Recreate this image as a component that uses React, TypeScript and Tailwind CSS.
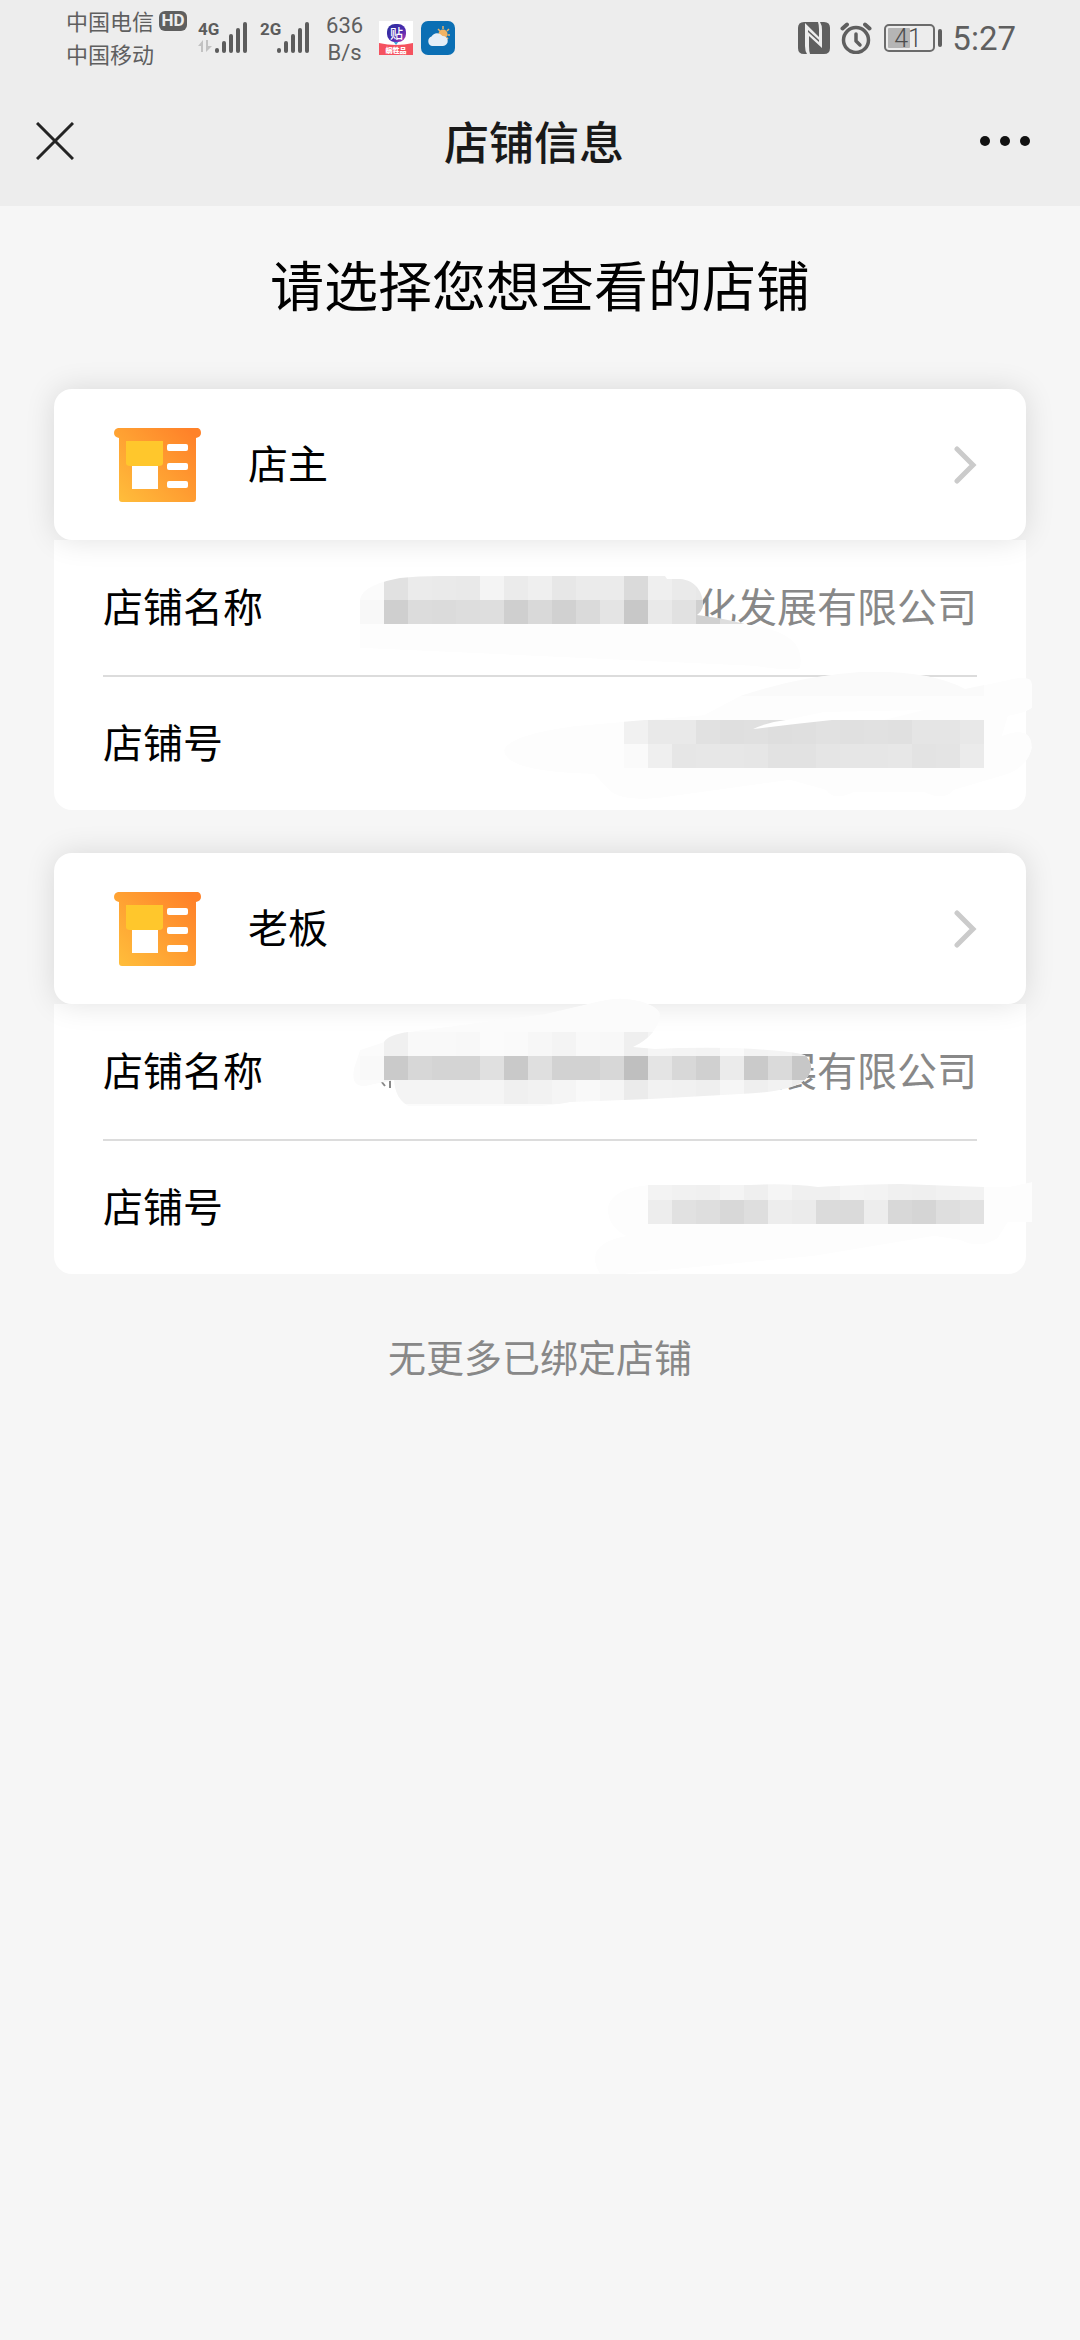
import type { ReactNode } from "react";

type CellRow = {
  x: number;
  y: number;
  colors: string[];
};

type Smudge = {
  id: string;
  outline: string;
  base: string;
  rows: CellRow[];
  children?: ReactNode;
};

type Shop = {
  id: string;
  role: string;
  nameTail: string;
  overlay: ReactNode;
};

const CELL = 24;

// One censored area: a hand-drawn outline filled with a grid of grey cells
function Mosaic({ id, outline, base, rows, children }: Smudge) {
  return (
    <g>
      <clipPath id={id}>
        <path d={outline} />
      </clipPath>
      <g clipPath={`url(#${id})`}>
        <path d={outline} fill={base} />
        {rows.map((row) => (
          <g key={row.y} shapeRendering="crispEdges">
            {row.colors.map((color, i) => (
              <rect key={i} x={row.x + i * CELL} y={row.y} width={CELL} height={CELL} fill={color} />
            ))}
          </g>
        ))}
      </g>
      {children}
    </g>
  );
}

const ownerOverlay = (
  <>
    <Mosaic
      id="owner-name"
      base="#fdfdfd"
      outline="M306 62 C306 50 320 43 346 38 Q364 36 386 36 H611 L613 39 H626 C643 40 650 55 649 66 Q648 71 643 75 Q668 78 691 84 C736 90 751 105 746 128 Q740 132 700 126 L306 108 Z"
      rows={[
        { x: 306, y: 36, colors: ["#fbfbfb", "#e1e1e1", "#ebebeb", "#eaeaea", "#e9e9e9", "#f4f4f4", "#ebebeb", "#efefef", "#e7e7e7", "#ebebeb", "#ebebeb", "#dadada", "#efefef", "#eaeaea", "#e8e8e8"] },
        { x: 306, y: 60, colors: ["#f8f8f8", "#cfcfcf", "#dcdcdc", "#dbdbdb", "#dddddd", "#dedede", "#cfcfcf", "#d9d9d9", "#d1d1d1", "#dadada", "#e4e4e4", "#c8c8c8", "#e9e9e9", "#e1e1e1", "#d0d0d0", "#dedede"] },
      ]}
    />
    <Mosaic
      id="owner-number"
      base="#fdfdfd"
      outline="M450 210 Q455 195 520 186 L650 175 L686 156 Q746 136 806 132 Q876 130 911 149 L954 140 Q978 134 978 144 V168 Q972 173 954 176 L948 196 Q978 184 978 208 Q974 226 954 234 L900 250 Q890 262 870 252 L800 252 Q780 262 772 250 L736 240 L620 256 Q570 264 555 250 L540 234 Q450 232 450 210Z"
      rows={[
        { x: 642, y: 132, colors: Array(12).fill("#fafafa") },
        { x: 570, y: 180, colors: ["#f1f1f1", "#e9e9e9", "#e9e9e9", "#e1e1e1", "#dfdfdf", "#e0e0e0", "#dedede", "#dfdfdf", "#e1e1e1", "#e0e0e0", "#e1e1e1", "#e0e0e0", "#e5e5e5", "#e5e5e5", "#e8e8e8"] },
        { x: 570, y: 204, colors: ["#fafafa", "#efefef", "#e6e6e6", "#e7e7e7", "#e7e7e7", "#e6e6e6", "#e2e2e2", "#e2e2e2", "#e5e5e5", "#e6e6e6", "#e6e6e6", "#e7e7e7", "#e3e3e3", "#e4e4e4", "#ebebeb"] },
      ]}
    >
      <path d="M699 189 Q714 182 732 180 L770 172 L870 170 L830 180 H778 Q740 184 699 189Z" fill="#fff" />
    </Mosaic>
  </>
);

const bossOverlay = (
  <>
    <path d="M327 77 L331 82 M336 76 V84" stroke="#888" strokeWidth="2" fill="none" />
    <Mosaic
      id="boss-name"
      base="#fbfbfb"
      outline="M306 46 Q318 42 330 38 Q334 31 354 28 L491 10 L546 -3 Q566 -8 586 -3 Q606 3 606 11 Q604 31 579 43 L601 45 Q636 43 681 44 Q746 47 752 52 Q764 66 748 78 Q734 88 686 90 L596 95 L516 98 Q496 102 486 102 H354 Q341 94 340 76 L312 82 Q296 84 300 64Z"
      rows={[
        { x: 330, y: 28, colors: ["#f0f0f0", "#f9f9f9", "#f9f9f9", "#f8f8f8", "#fbfbfb", "#fafafa", "#f7f7f7", "#f4f4f4", "#f9f9f9", "#f8f8f8", "#efefef", "#f5f5f5", "#f4f4f4", "#f3f3f3", "#fafafa", "#f3f3f3", "#f4f4f4", "#f0f0f0"] },
        { x: 306, y: 52, colors: ["#f9f9f9", "#cacaca", "#d7d7d7", "#d4d4d4", "#d4d4d4", "#e0e0e0", "#c9c9c9", "#dfdfdf", "#d2d2d2", "#d2d2d2", "#d7d7d7", "#bfbfbf", "#e4e4e4", "#d8d8d8", "#d0d0d0", "#ebebeb", "#cacaca", "#dadada", "#c7c7c7"] },
        { x: 330, y: 76, colors: ["#f4f4f4", "#f4f4f4", "#f4f4f4", "#f4f4f4", "#f5f5f5", "#f0f0f0", "#f2f2f2", "#f5f5f5", "#f9f9f9", "#f5f5f5", "#ebebeb", "#f2f2f2", "#f1f1f1", "#efefef", "#f6f6f6", "#efefef", "#f2f2f2", "#ececec"] },
      ]}
    />
    <Mosaic
      id="boss-number"
      base="#fdfdfd"
      outline="M554 202 Q560 184 594 181 Q640 181 696 181 Q734 179 764 183 Q816 180 846 180 L930 183 H954 L978 178 V218 H954 L944 234 Q926 246 906 236 L880 232 L760 252 L570 270 H546 Q528 240 572 232 Q552 222 554 202Z"
      rows={[
        { x: 594, y: 172, colors: ["#f3f3f3", "#f1f1f1", "#f0f0f0", "#f4f4f4", "#efefef", "#f5f5f5", "#f0f0f0", "#f0f0f0", "#f4f4f4", "#f3f3f3", "#f0f0f0", "#efefef", "#f1f1f1", "#f2f2f2"] },
        { x: 594, y: 196, colors: ["#ededed", "#e1e1e1", "#dedede", "#d8d8d8", "#dedede", "#ededed", "#ebebeb", "#dbdbdb", "#dadada", "#ededed", "#d8d8d8", "#d5d5d5", "#dedede", "#e1e1e1"] },
      ]}
    />
  </>
);

const shops: Shop[] = [
  { id: "owner", role: "店主", nameTail: "化发展有限公司", overlay: ownerOverlay },
  { id: "boss", role: "老板", nameTail: "展有限公司", overlay: bossOverlay },
];

function Signal({ label, arrows }: { label: string; arrows?: boolean }) {
  return (
    <svg viewBox="0 0 52 36" className="h-9 w-13" fill="#5c5c5c">
      <text x="0" y="15" fontSize="17" fontWeight="700" fontFamily="Roboto, sans-serif">{label}</text>
      {arrows && <path d="M0 26 L5 20 V32 H3 V26Z M8 20 H10 V26 H14 L8 32Z" fill="#c2c2c2" />}
      <rect x="17" y="28" width="4" height="5" rx="2" />
      <rect x="24" y="21" width="4" height="12" rx="2" />
      <rect x="31" y="14" width="4" height="19" rx="2" />
      <rect x="38" y="8" width="4" height="25" rx="2" />
      <rect x="45" y="2" width="4" height="31" rx="2" />
    </svg>
  );
}

function StatusBar() {
  return (
    <div className="flex h-19 items-center justify-between pr-16 pl-[66px] text-[#5f5f5f]">
      <div className="flex items-center">
        <div className="pb-[2px] text-[22px] leading-[33px]">
          <div className="flex items-center gap-[5px]">
            <span>中国电信</span>
            <span className="flex h-5 w-7 items-center justify-center rounded-md bg-[#5f5f5f] font-[Roboto,sans-serif] text-[17px] leading-none font-bold text-[#ededed]">
              HD
            </span>
          </div>
          <div>中国移动</div>
        </div>
        <div className="ml-[11px] flex gap-[10px]">
          <Signal label="4G" arrows />
          <Signal label="2G" />
        </div>
        <div className="ml-[14px] pt-[2px] text-center font-[Roboto,sans-serif] text-[22px] leading-[27px]">
          <div>636</div>
          <div>B/s</div>
        </div>
        <div className="ml-4 flex gap-2">
          {/* Sticker app */}
          <svg viewBox="0 0 34 34" className="size-[34px]">
            <defs>
              <linearGradient id="sticker" x1="0" y1="0" x2="1" y2="1">
                <stop offset="0" stopColor="#2b2f9a" />
                <stop offset="0.6" stopColor="#4b2bb0" />
                <stop offset="1" stopColor="#c03fb0" />
              </linearGradient>
            </defs>
            <rect width="34" height="34" fill="#fff" />
            <path d="M14 20 H20 L17 24Z" fill="#3fa0d8" />
            <rect x="8" y="3" width="19" height="18" rx="8" fill="url(#sticker)" />
            <text x="17.5" y="17" fontSize="13" fontWeight="500" textAnchor="middle" fill="#fff">贴</text>
            <path d="M0 22 Q17 26 34 22 V34 H0Z" fill="#f5525f" />
            <text x="17" y="32" fontSize="7" fontWeight="900" textAnchor="middle" fill="#fff">蜗牲品</text>
          </svg>
          {/* Weather app */}
          <svg viewBox="0 0 34 34" className="size-[34px]">
            <rect width="34" height="34" rx="7" fill="#0b6fb4" />
            <path d="M22 5 V8 M28 8 L26 10 M29 14 H26.5 M17 8 L19 10 M27 18 L25.5 16.5" stroke="#e9b46a" strokeWidth="1.5" />
            <circle cx="22" cy="13" r="4.5" fill="#f0b363" />
            <path d="M11 25 A5 5 0 0 1 10.500 15.500 A6.500 6.500 0 0 1 21.500 15 A5 5 0 0 1 22 25Z" fill="#e4eef7" />
          </svg>
        </div>
      </div>

      <div className="flex items-center">
        {/* NFC */}
        <svg viewBox="0 0 32 32" className="size-8">
          <path d="M6 0 H26 Q32 0 32 6 V26 Q32 32 26 32 H6 Q0 32 0 26 V6 Q0 0 6 0Z" fill="#5f5f5f" />
          <path d="M7 1 L21 15 V7 Q21 3 20 0 H22 Q24 3 24 8 V26 L11 14 V24 Q11 29 12 32 H9 Q7 29 7 24Z" fill="#ededed" />
          <path d="M10 8 L21 18 V20 L10 10Z" fill="#5f5f5f" />
        </svg>
        {/* Alarm */}
        <svg viewBox="0 0 32 32" className="ml-[10px] size-8" fill="none" stroke="#5f5f5f" strokeLinecap="round">
          <circle cx="16" cy="18" r="12.500" strokeWidth="3.500" />
          <path d="M16 12 V19 L20 23" strokeWidth="3.500" strokeLinejoin="round" />
          <path d="M2.500 6.500 L7 2.500 M29.500 6.500 L25 2.500" strokeWidth="4" />
        </svg>
        {/* Battery */}
        <svg viewBox="0 0 58 28" className="ml-3 h-7 w-[58px]">
          <rect x="1" y="1" width="49" height="26" rx="4" fill="none" stroke="#6b6b6b" strokeWidth="2" />
          <rect x="4" y="4" width="22" height="20" rx="1" fill="#b5b5b5" />
          <rect x="54" y="5" width="4" height="18" rx="2" fill="#5f5f5f" />
          <text x="24" y="23" fontSize="25" fontWeight="300" textAnchor="middle" fill="#4d4d4d" fontFamily="Roboto, sans-serif">41</text>
        </svg>
        <span className="ml-[10px] font-[Roboto,sans-serif] text-[33px] leading-none">5:27</span>
      </div>
    </div>
  );
}

function NavBar() {
  return (
    <div className="flex h-[130px] items-center justify-between px-9">
      <button type="button" aria-label="关闭" className="w-13">
        <svg viewBox="0 0 38 38" className="size-[38px]" stroke="#242424" strokeWidth="3">
          <path d="M1 1 L37 37 M37 1 L1 37" />
        </svg>
      </button>
      <h1 className="text-[45px] font-medium text-[#191919]">店铺信息</h1>
      <button type="button" aria-label="更多">
        <svg viewBox="0 0 64 10" className="h-[10px] w-16" fill="#111">
          <circle cx="5" cy="5" r="5" />
          <circle cx="25" cy="5" r="5" />
          <circle cx="45" cy="5" r="5" />
        </svg>
      </button>
    </div>
  );
}

function ShopIcon() {
  return (
    <svg viewBox="0 0 88 74" className="h-[74px] w-22">
      <defs>
        <linearGradient id="shop" x1="0" y1="1" x2="1" y2="0.200">
          <stop offset="0" stopColor="#ffc03c" />
          <stop offset="1" stopColor="#ff8229" />
        </linearGradient>
      </defs>
      <path
        d="M4 0 H84 Q87 1 87 5 Q87 9 82 10 V71 Q82 74 79 74 H8 Q5 74 5 71 V10 Q0 9 0 5 Q0 1 4 0Z"
        fill="url(#shop)"
      />
      <path d="M12 13 H49 V35 Q49 38 45 38 H16 Q12 38 12 35Z" fill="#ffc72c" />
      <rect x="18" y="38" width="26" height="23" fill="#fff" />
      <rect x="53" y="16" width="21" height="7" rx="2" fill="#fff" />
      <rect x="53" y="35" width="21" height="7" rx="2" fill="#fff" />
      <rect x="53" y="53" width="21" height="7" rx="2" fill="#fff" />
    </svg>
  );
}

function ShopCard({ shop }: { shop: Shop }) {
  return (
    <section>
      <button
        type="button"
        className="relative z-10 flex h-[151px] w-full items-center rounded-[18px] bg-white pr-12 pl-15 text-left text-[40px] text-black shadow-[0_0_30px_rgba(0,0,0,0.12)]"
      >
        <ShopIcon />
        <span className="ml-[46px] flex-1 pb-[6px]">{shop.role}</span>
        <svg viewBox="0 0 24 38" className="h-[38px] w-6" fill="none" stroke="#cbcbcb" strokeWidth="5" strokeLinecap="round">
          <path d="M3 3 L19 19 L3 35" />
        </svg>
      </button>
      <div className="relative rounded-b-[18px] bg-white px-[49px] text-[40px]">
        <dl>
          <div className="flex h-[137px] items-center justify-between border-b-2 border-[#dcdcdc] pb-[6px]">
            <dt className="text-black">店铺名称</dt>
            <dd className="text-[#888]">{shop.nameTail}</dd>
          </div>
          <div className="flex h-[133px] items-center justify-between pb-[6px]">
            <dt className="text-black">店铺号</dt>
            <dd />
          </div>
        </dl>
        <svg viewBox="0 0 972 270" className="pointer-events-none absolute top-0 right-0 z-20 h-[270px] w-[972px] overflow-visible" aria-hidden="true">
          {shop.overlay}
        </svg>
      </div>
    </section>
  );
}

export default function App() {
  return (
    <div className="min-h-screen bg-[#f6f6f6] font-['Noto_Sans_CJK_SC',sans-serif]">
      <header className="bg-[#ededed]">
        <StatusBar />
        <NavBar />
      </header>

      <main className="px-[54px]">
        <h2 className="pt-9 text-center text-[54px] leading-[84px] text-black">请选择您想查看的店铺</h2>
        <div className="mt-[63px] flex flex-col gap-[43px]">
          {shops.map((shop) => (
            <ShopCard key={shop.id} shop={shop} />
          ))}
        </div>
        <p className="mt-13 text-center text-[38px] leading-[60px] text-[#888]">无更多已绑定店铺</p>
      </main>
    </div>
  );
}
